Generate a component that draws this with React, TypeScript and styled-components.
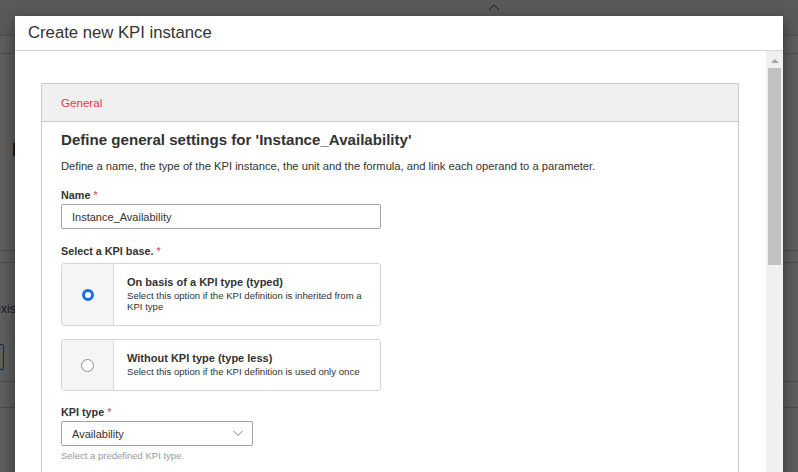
import React from "react";
import styled, { createGlobalStyle } from "styled-components";

const GlobalStyle = createGlobalStyle`
  html, body { margin: 0; padding: 0; height: 472px; overflow: hidden; }
  body { font-family: "Liberation Sans", Arial, sans-serif; background: #fafafa; color: #333; }
  * { box-sizing: border-box; }
`;

const Stage = styled.div`
  position: relative;
  width: 798px;
  height: 472px;
  overflow: hidden;
`;

/* ---------- dimmed application behind the dialog ---------- */
const BgApp = styled.div`
  display: flex;
  flex-direction: column;
  height: 100%;
  background: #fafafa;
`;
const BgTop = styled.div`
  height: 36px;
  flex: none;
  border-bottom: 1px solid #cfcfcf;
  background: #ececec;
  display: flex;
  align-items: flex-start;
  padding: 4px 0 0 488px;
`;
const BgTabs = styled.div`
  height: 18px;
  flex: none;
  border-bottom: 1px solid #d0d0d0;
`;
const BgHeading = styled.div`
  margin: 86px 0 0 12px;
  width: 14px;
  overflow: hidden;
  font-size: 18px;
  line-height: 20px;
  font-weight: bold;
  color: #333;
`;
const BgRule = styled.div<{ $gap: number }>`
  margin-top: ${(p) => p.$gap}px;
  border-top: 1px solid #c8c8c8;
`;
const BgEdge = styled.div<{ $gap: number; $w: number }>`
  margin-top: ${(p) => p.$gap}px;
  width: ${(p) => p.$w}px;
  display: flex;
  justify-content: flex-end;
  white-space: nowrap;
`;
const BgNote = styled.span`
  font-size: 12px;
  line-height: 14px;
  color: #444;
`;
const BgButton = styled.span`
  flex: none;
  width: 90px;
  height: 26px;
  border: 1px solid #2f6db5;
  border-radius: 2px;
`;

const Overlay = styled.div`
  position: absolute;
  inset: 0;
  background: rgba(0, 0, 0, 0.62);
`;

/* ---------- dialog ---------- */
const Modal = styled.div`
  position: absolute;
  left: 15px;
  top: 16px;
  width: 768px;
  bottom: -60px;
  background: #fff;
  box-shadow: 0 5px 15px rgba(0, 0, 0, 0.5);
  display: flex;
  flex-direction: column;
`;
const ModalHeader = styled.div`
  height: 35px;
  flex: none;
  border-bottom: 1px solid #d6d6d6;
  display: flex;
  align-items: center;
  padding-left: 13px;
`;
const ModalTitle = styled.h1`
  margin: 0;
  font-size: 16.7px;
  line-height: 20px;
  font-weight: normal;
  color: #333;
`;
const ModalBody = styled.div`
  flex: 1;
  min-height: 0;
  display: flex;
`;
const ScrollArea = styled.div`
  flex: 1;
  padding: 32px 27px 0 26px;
  overflow: hidden;
`;
const Scrollbar = styled.div`
  width: 17px;
  flex: none;
  background: #f0f0f0;
  display: flex;
  flex-direction: column;
  align-items: center;
  padding-top: 8px;
`;
const ScrollArrow = styled.span`
  width: 0;
  height: 0;
  border-left: 4px solid transparent;
  border-right: 4px solid transparent;
  border-bottom: 4px solid #a3a3a3;
`;
const ScrollThumb = styled.span`
  margin-top: 5px;
  width: 13px;
  height: 197px;
  background: #c1c1c1;
`;

/* ---------- panel ---------- */
const Panel = styled.section`
  border: 1px solid #c9c9c9;
  border-bottom: none;
  border-radius: 2px 2px 0 0;
  min-height: 600px;
`;
const PanelHeader = styled.div`
  height: 38px;
  background: #f0f0f0;
  border-bottom: 1px solid #c9c9c9;
  display: flex;
  align-items: center;
  padding-left: 19px;
  font-size: 11.6px;
  color: #e8334a;
`;
const PanelBody = styled.div`
  padding: 9px 19px 40px;
  display: flex;
  flex-direction: column;
  align-items: flex-start;
`;
const Heading = styled.h2`
  margin: 0;
  font-size: 15.1px;
  line-height: 18px;
  font-weight: bold;
  color: #333;
`;
const Intro = styled.p`
  margin: 10px 0 0;
  font-size: 11.2px;
  line-height: 14px;
  color: #333;
`;
const Label = styled.div<{ $gap: number }>`
  margin-top: ${(p) => p.$gap}px;
  font-size: 10.8px;
  line-height: 14px;
  font-weight: bold;
  color: #333;
`;
const Req = styled.span`
  color: #e8334a;
  font-weight: normal;
  margin-left: 3px;
`;
const TextBox = styled.div<{ $w: number; $gap: number }>`
  margin-top: ${(p) => p.$gap}px;
  width: ${(p) => p.$w}px;
  height: 25px;
  border: 1px solid #a3a3a3;
  border-radius: 2px;
  padding: 0 8px 0 10px;
  display: flex;
  align-items: center;
  justify-content: space-between;
  font-size: 11px;
  color: #333;
`;
const RadioCard = styled.div<{ $gap: number }>`
  margin-top: ${(p) => p.$gap}px;
  width: 320px;
  display: flex;
  border: 1px solid #d6d6d6;
  border-radius: 3px;
  overflow: hidden;
`;
const RadioCell = styled.div`
  width: 52px;
  flex: none;
  background: #f5f5f5;
  border-right: 1px solid #dcdcdc;
  display: flex;
  align-items: center;
  justify-content: center;
`;
const Radio = styled.span<{ $on: boolean }>`
  width: ${(p) => (p.$on ? 12 : 13)}px;
  height: ${(p) => (p.$on ? 12 : 13)}px;
  border-radius: 50%;
  background: #fff;
  border: ${(p) => (p.$on ? "3.5px solid #1a6fe0" : "1px solid #8c8c8c")};
`;
const CardText = styled.div`
  padding: 12px 8px 13px 13px;
  display: flex;
  flex-direction: column;
  gap: 1px;
`;
const CardTitle = styled.div`
  font-size: 11px;
  line-height: 13px;
  font-weight: bold;
  color: #333;
`;
const CardDesc = styled.div`
  font-size: 9.6px;
  line-height: 11px;
  color: #333;
`;
const Hint = styled.div`
  margin-top: 4px;
  font-size: 9.5px;
  line-height: 12px;
  color: #999;
`;

const Chevron = ({ up }: { up?: boolean }) => (
  <svg width="12" height="7" viewBox="0 0 12 7" fill="none">
    <path
      d={up ? "M1 6 L6 1 L11 6" : "M1.5 1 L6 5.5 L10.5 1"}
      stroke={up ? "#3a4a66" : "#808080"}
      strokeWidth="1"
    />
  </svg>
);

const options = [
  {
    on: true,
    title: "On basis of a KPI type (typed)",
    desc: "Select this option if the KPI definition is inherited from a KPI type",
    gap: 5,
  },
  {
    on: false,
    title: "Without KPI type (type less)",
    desc: "Select this option if the KPI definition is used only once",
    gap: 13,
  },
];

export default function App() {
  return (
    <Stage>
      <GlobalStyle />
      <BgApp>
        <BgTop>
          <Chevron up />
        </BgTop>
        <BgTabs />
        <BgHeading>N</BgHeading>
        <BgRule $gap={90} />
        <BgRule $gap={11} />
        <BgEdge $gap={39} $w={19}>
          <BgNote>exist</BgNote>
        </BgEdge>
        <BgEdge $gap={28} $w={4}>
          <BgButton />
        </BgEdge>
        <BgRule $gap={11} />
        <BgRule $gap={25} />
      </BgApp>
      <Overlay />
      <Modal>
        <ModalHeader>
          <ModalTitle>Create new KPI instance</ModalTitle>
        </ModalHeader>
        <ModalBody>
          <ScrollArea>
            <Panel>
              <PanelHeader>General</PanelHeader>
              <PanelBody>
                <Heading>Define general settings for 'Instance_Availability'</Heading>
                <Intro>
                  Define a name, the type of the KPI instance, the unit and the formula, and link each
                  operand to a parameter.
                </Intro>
                <Label $gap={15}>
                  Name<Req>*</Req>
                </Label>
                <TextBox $w={320} $gap={2}>Instance_Availability</TextBox>
                <Label $gap={15}>
                  Select a KPI base.<Req>*</Req>
                </Label>
                {options.map((o) => (
                  <RadioCard key={o.title} $gap={o.gap}>
                    <RadioCell>
                      <Radio $on={o.on} />
                    </RadioCell>
                    <CardText>
                      <CardTitle>{o.title}</CardTitle>
                      <CardDesc>{o.desc}</CardDesc>
                    </CardText>
                  </RadioCard>
                ))}
                <Label $gap={14}>
                  KPI type<Req>*</Req>
                </Label>
                <TextBox $w={192} $gap={2}>
                  Availability
                  <Chevron />
                </TextBox>
                <Hint>Select a predefined KPI type.</Hint>
              </PanelBody>
            </Panel>
          </ScrollArea>
          <Scrollbar>
            <ScrollArrow />
            <ScrollThumb />
          </Scrollbar>
        </ModalBody>
      </Modal>
    </Stage>
  );
}
